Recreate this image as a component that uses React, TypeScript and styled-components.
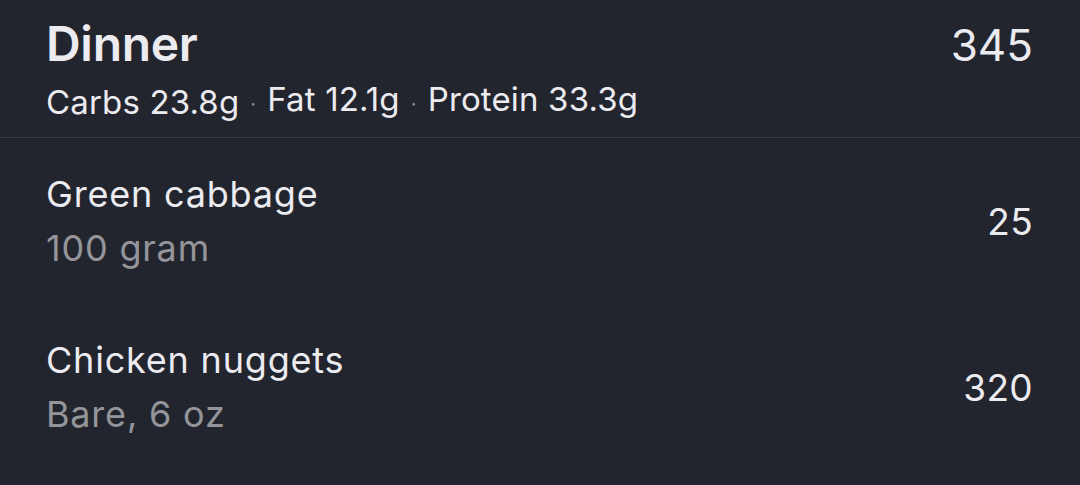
import styled, { createGlobalStyle } from "styled-components";

const GlobalStyle = createGlobalStyle`
  html, body {
    margin: 0;
    padding: 0;
    background: #23252e;
  }
  body {
    font-family: Inter, "Noto Sans", "Liberation Sans", sans-serif;
    -webkit-font-smoothing: antialiased;
  }
`;

const Screen = styled.div`
  width: 1080px;
  height: 485px;
  background: #23252e;
  color: #ebebf0;
  overflow: hidden;
`;

const MealHeader = styled.header`
  display: flex;
  justify-content: space-between;
  align-items: flex-start;
  padding: 16px 47px 0 46px;
  height: 121px;
  border-bottom: 1px solid #363842;
`;

const MealInfo = styled.div`
  display: flex;
  flex-direction: column;
`;

const MealTitle = styled.h1`
  margin: 0;
  font-size: 48px;
  font-weight: 600;
  line-height: 56px;
  letter-spacing: -0.3px;
`;

const Macros = styled.div`
  margin-top: 8px;
  font-size: 33px;
  line-height: 38px;
  letter-spacing: 0.15px;
  display: flex;
  align-items: center;
`;

const Dot = styled.span`
  color: #8e8f96;
  margin: 0 11px;
  font-size: 20px;
`;

const MealTotal = styled.div`
  font-size: 44px;
  line-height: 56px;
  margin-top: 1px;
`;

const FoodList = styled.ul`
  list-style: none;
  margin: 0;
  padding: 0;
`;

const FoodRow = styled.li`
  display: flex;
  justify-content: space-between;
  align-items: center;
  height: 166px;
  padding: 0 47px 0 46px;
  box-sizing: border-box;
`;

const FoodInfo = styled.div`
  display: flex;
  flex-direction: column;
`;

const FoodName = styled.div`
  font-size: 36px;
  line-height: 54px;
  letter-spacing: 0.8px;
`;

const FoodServing = styled.div`
  font-size: 36px;
  line-height: 54px;
  letter-spacing: 0.8px;
  color: #94959b;
`;

const FoodCalories = styled.div`
  font-size: 37px;
  letter-spacing: 0.3px;
`;

type Food = { name: string; serving: string; calories: number };

const foods: Food[] = [
  { name: "Green cabbage", serving: "100 gram", calories: 25 },
  { name: "Chicken nuggets", serving: "Bare, 6 oz", calories: 320 },
];

const macros = ["Carbs 23.8g", "Fat 12.1g", "Protein 33.3g"];

export default function App() {
  return (
    <Screen>
      <GlobalStyle />
      <MealHeader>
        <MealInfo>
          <MealTitle>Dinner</MealTitle>
          <Macros>
            {macros.map((m, i) => (
              <span key={m}>
                {i > 0 && <Dot>·</Dot>}
                {m}
              </span>
            ))}
          </Macros>
        </MealInfo>
        <MealTotal>345</MealTotal>
      </MealHeader>
      <FoodList>
        {foods.map((f) => (
          <FoodRow key={f.name}>
            <FoodInfo>
              <FoodName>{f.name}</FoodName>
              <FoodServing>{f.serving}</FoodServing>
            </FoodInfo>
            <FoodCalories>{f.calories}</FoodCalories>
          </FoodRow>
        ))}
      </FoodList>
    </Screen>
  );
}
